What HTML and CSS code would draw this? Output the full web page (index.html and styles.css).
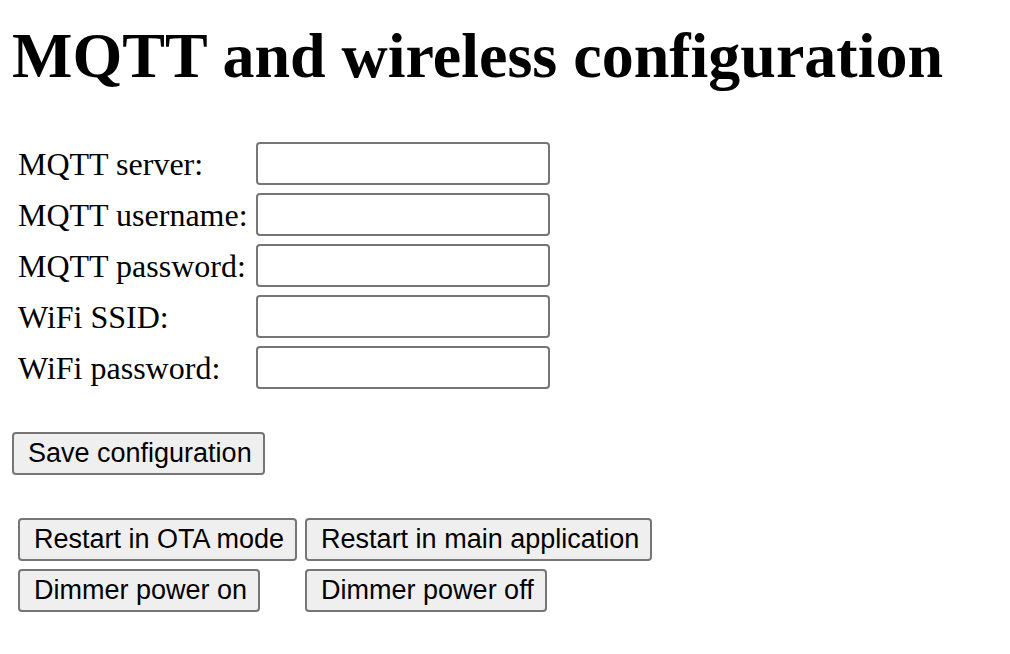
FILE: index.html
```html
<!DOCTYPE html>
<html lang="en">
<head>
<meta charset="utf-8">
<title>MQTT and wireless configuration</title>
<link rel="stylesheet" href="styles.css">
</head>
<body>
<h1 class="title">MQTT and wireless configuration</h1>
<form class="config">
<table class="fields">
<tr><td><label for="server">MQTT server:</label></td><td><input class="field" type="text" id="server"></td></tr>
<tr><td><label for="user">MQTT username:</label></td><td><input class="field" type="text" id="user"></td></tr>
<tr><td><label for="pass">MQTT password:</label></td><td><input class="field" type="password" id="pass"></td></tr>
<tr><td><label for="ssid">WiFi SSID:</label></td><td><input class="field" type="text" id="ssid"></td></tr>
<tr><td><label for="wifipass">WiFi password:</label></td><td><input class="field" type="password" id="wifipass"></td></tr>
</table>
<button class="button save" type="submit">Save configuration</button>
</form>
<table class="actions">
<tr><td><button class="button" type="button">Restart in OTA mode</button></td><td><button class="button" type="button">Restart in main application</button></td></tr>
<tr><td><button class="button" type="button">Dimmer power on</button></td><td><button class="button" type="button">Dimmer power off</button></td></tr>
</table>
</body>
</html>
```
FILE: styles.css
```css
* {
  box-sizing: border-box;
}

body {
  margin: 0;
  padding: 20px 12px;
  background: #fff;
  color: #000;
  font: 32px/36px "Liberation Serif", "Times New Roman", serif;
}

.title {
  margin: 0 0 44px;
  font-size: 64px;
  line-height: 72px;
  font-weight: bold;
}

.fields,
.actions {
  border-spacing: 4px;
}

td {
  padding: 2px;
  height: 47px;
  vertical-align: middle;
}

.field,
.button {
  display: block;
  height: 43px;
  border: 2px solid #767676;
  border-radius: 4px;
  font: 27px/30px "Liberation Sans", Arial, sans-serif;
}

.field {
  width: 294px;
  padding: 2px 4px;
  background: #fff;
}

.button {
  padding: 0 11px 2px 14px;
  background: #efefef;
  color: #000;
}

.save {
  margin: 37px 0;
}
```
